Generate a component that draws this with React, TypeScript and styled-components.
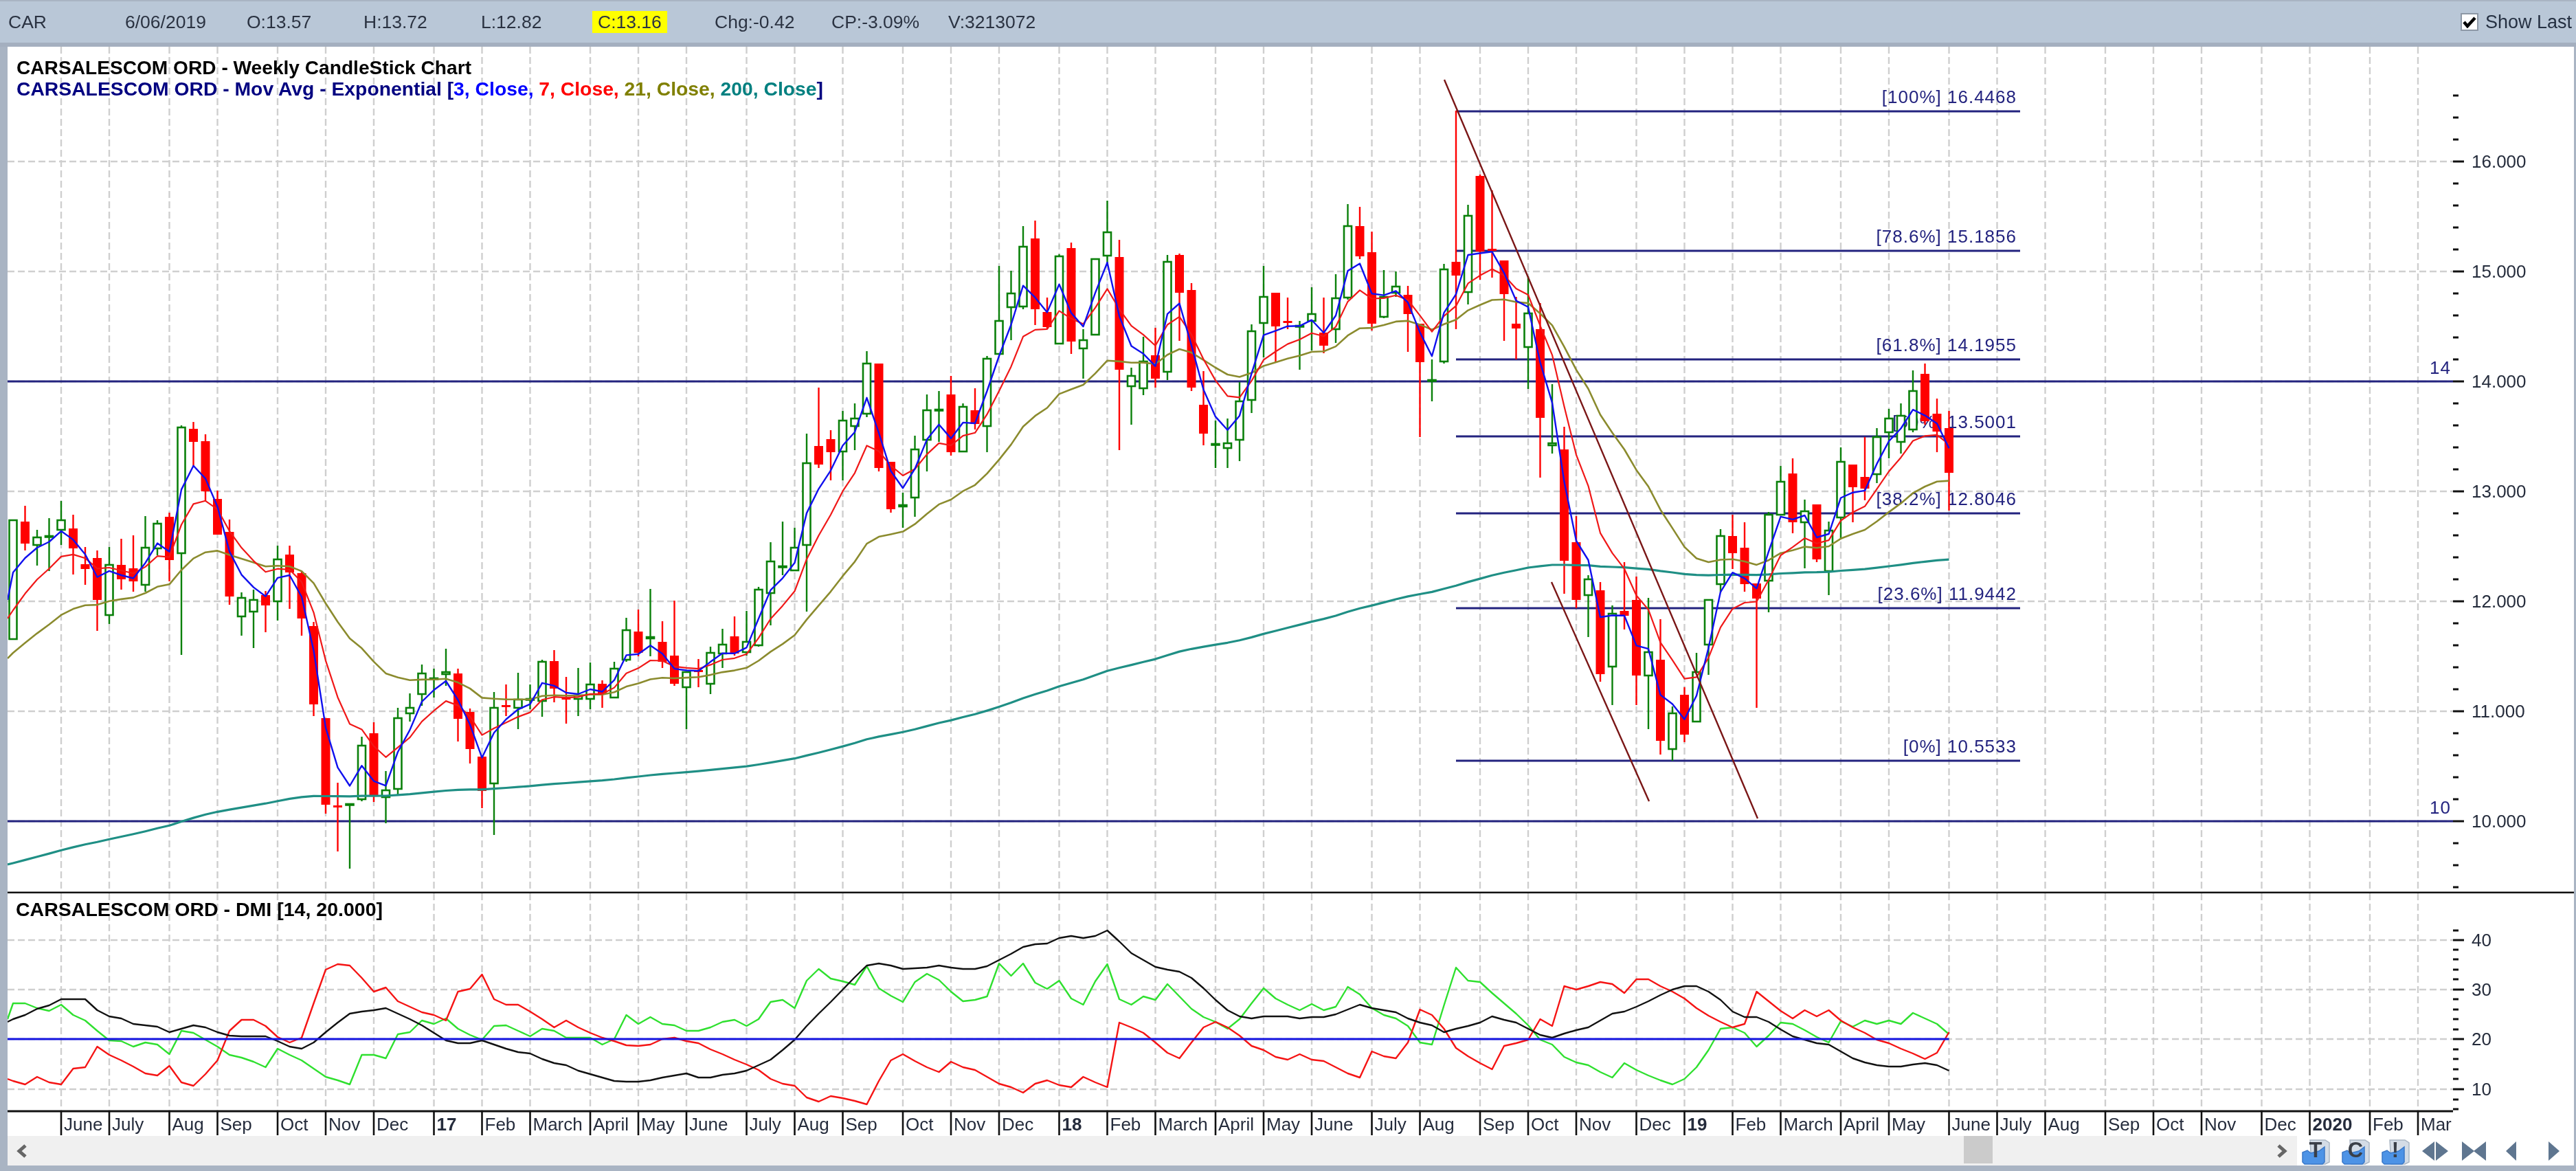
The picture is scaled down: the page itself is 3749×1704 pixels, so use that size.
import styled, { createGlobalStyle } from 'styled-components'

const WIDTH = 3749
const PLOT_LEFT = 11
const PLOT_RIGHT = 3570
const STEP = 17.5
const FONT = '"Liberation Sans", Arial, sans-serif'

const GlobalStyle = createGlobalStyle`
  html, body {
    margin: 0;
    padding: 0;
    background: #a9b4c3;
  }
`

const Root = styled.div`
  width: ${WIDTH}px;
  height: 1704px;
  display: flex;
  flex-direction: column;
  overflow: hidden;
  background: #a9b4c3;
  font-family: ${FONT};
  filter: blur(0.7px);
`

const TopBar = styled.div`
  height: 60px;
  margin-top: 2px;
  display: flex;
  align-items: center;
  padding: 0 6px 0 12px;
  background: #b9c7d7;
  color: #2b3342;
  font-size: 26.5px;
`

const Field = styled.span<{ $w: number }>`
  flex: 0 0 ${(p) => p.$w}px;
  white-space: nowrap;
`

const Highlight = styled.span`
  display: inline-block;
  height: 32px;
  line-height: 32px;
  padding: 0 8px;
  background: #ffff00;
`

const ShowLast = styled.label`
  margin-left: auto;
  display: flex;
  align-items: center;
  gap: 10px;
  color: #253042;
  font-size: 27px;
`

const CheckBox = styled.span`
  width: 22px;
  height: 22px;
  display: flex;
  align-items: center;
  justify-content: center;
  background: #fff;
  border: 2px solid #8d98a6;
`

const Strip = styled.div`
  height: 6px;
  background: #a4afbf;
`

const Frame = styled.div`
  flex: 1;
  margin: 0 3px 8px ${PLOT_LEFT}px;
  display: flex;
  flex-direction: column;
  background: #fff;
`

const ChartSvg = styled.svg`
  display: block;
  width: 100%;
`

const ScrollRow = styled.div`
  height: 43px;
  display: flex;
  align-items: center;
`

const TrackWrap = styled.div`
  position: relative;
  height: 100%;
`

const Track = styled.div`
  width: 3332px;
  height: 100%;
  display: flex;
  align-items: center;
  justify-content: space-between;
  padding: 0 13px 0 12px;
  box-sizing: border-box;
  background: #f0f0f0;
`

const Thumb = styled.div`
  position: absolute;
  left: 2847px;
  top: 0;
  width: 42px;
  height: 40px;
  background: #cbcbcb;
`

const IconRow = styled.div`
  display: flex;
  align-items: center;
  padding-left: 7px;
`

const IconSlot = styled.span<{ $w: number }>`
  flex: 0 0 ${(p) => p.$w}px;
  display: flex;
`

const Label = styled.text<{ $weight?: number }>`
  font-family: ${FONT};
  font-size: 26px;
  font-weight: ${(p) => p.$weight ?? 400};
  fill: #252c3c;
`

const FibLabel = styled(Label)`
  fill: #23237f;
  letter-spacing: 1px;
`

const Title = styled.text<{ $fill?: string }>`
  font-family: ${FONT};
  font-size: 27px;
  font-weight: 700;
  fill: ${(p) => p.$fill ?? '#000'};
`

const Span = styled.tspan<{ $fill: string }>`
  fill: ${(p) => p.$fill};
`

// high, body top, body bottom, low (screen y), 1 = up week
type Candle = [number, number, number, number, number]

const candles: Candle[] = [
  [757, 757, 930, 930, 1], [736, 759, 791, 801, 0], [771, 782, 793, 823, 1], [754, 780, 781, 831, 1],
  [729, 757, 771, 793, 1], [749, 769, 798, 836, 0], [796, 821, 828, 851, 0], [801, 812, 873, 918, 0],
  [796, 822, 895, 908, 1], [784, 822, 843, 858, 0], [779, 827, 846, 861, 0], [751, 797, 851, 861, 1],
  [757, 762, 798, 808, 1], [746, 752, 815, 846, 0], [619, 622, 805, 953, 1], [614, 624, 643, 679, 0],
  [632, 642, 715, 729, 0], [714, 726, 778, 778, 0], [756, 774, 868, 880, 0], [862, 870, 897, 925, 1],
  [858, 873, 890, 943, 1], [860, 866, 881, 920, 0], [794, 814, 875, 903, 1], [794, 807, 833, 886, 0],
  [831, 834, 900, 925, 0], [905, 911, 1025, 1042, 0], [1045, 1045, 1171, 1184, 0], [1139, 1172, 1175, 1239, 0],
  [1170, 1170, 1171, 1264, 1], [1072, 1085, 1163, 1166, 1], [1051, 1067, 1159, 1167, 0], [1122, 1150, 1160, 1198, 1],
  [1030, 1045, 1148, 1157, 1], [1009, 1030, 1038, 1050, 1], [967, 980, 1010, 1027, 1], [973, 987, 988, 1015, 1],
  [944, 978, 981, 998, 1], [973, 980, 1046, 1079, 0], [1031, 1036, 1090, 1111, 0], [1101, 1101, 1151, 1176, 0],
  [1007, 1030, 1140, 1215, 1], [996, 1026, 1027, 1042, 0], [979, 1018, 1030, 1061, 1], [996, 1017, 1018, 1032, 1],
  [960, 963, 1020, 1043, 1], [946, 962, 1002, 1022, 0], [985, 1015, 1018, 1053, 0], [972, 1012, 1017, 1042, 1],
  [964, 996, 1017, 1032, 1], [990, 995, 1010, 1030, 0], [963, 973, 1015, 1015, 1], [899, 917, 960, 963, 1],
  [887, 919, 950, 955, 0], [857, 927, 929, 955, 1], [904, 934, 963, 972, 0], [874, 954, 995, 998, 0],
  [978, 978, 1000, 1061, 1], [959, 975, 977, 1000, 0], [941, 950, 995, 1010, 1], [915, 938, 951, 972, 1],
  [897, 926, 951, 954, 0], [889, 934, 949, 954, 1], [854, 858, 939, 941, 1], [789, 817, 863, 910, 1],
  [759, 824, 825, 837, 1], [768, 797, 830, 831, 1], [631, 674, 793, 890, 1], [564, 649, 676, 681, 0],
  [626, 639, 658, 699, 0], [598, 612, 657, 699, 1], [587, 609, 620, 655, 1], [511, 529, 602, 607, 1],
  [529, 529, 681, 686, 0], [672, 672, 741, 746, 0], [717, 735, 737, 768, 1], [634, 654, 724, 752, 1],
  [574, 597, 640, 686, 1], [569, 596, 597, 643, 1], [547, 574, 658, 663, 0], [587, 592, 657, 658, 1],
  [565, 597, 617, 625, 0], [518, 522, 620, 658, 1], [387, 467, 515, 515, 1], [394, 427, 447, 495, 1],
  [329, 359, 446, 450, 1], [321, 347, 450, 473, 0], [433, 454, 476, 479, 0], [370, 373, 500, 500, 1],
  [353, 361, 497, 515, 0], [479, 495, 507, 551, 1], [377, 377, 487, 487, 1], [292, 338, 372, 385, 1],
  [349, 374, 538, 655, 0], [535, 547, 562, 618, 1], [490, 526, 565, 575, 1], [477, 517, 551, 564, 0],
  [371, 381, 541, 553, 1], [369, 371, 426, 496, 0], [412, 422, 564, 569, 0], [540, 589, 631, 648, 0],
  [612, 646, 647, 681, 1], [609, 645, 652, 681, 1], [556, 584, 640, 671, 1], [472, 482, 582, 601, 1],
  [387, 432, 470, 520, 1], [426, 426, 475, 528, 0], [433, 467, 468, 479, 0], [467, 474, 475, 538, 1],
  [418, 457, 467, 510, 1], [433, 484, 503, 514, 0], [399, 434, 479, 499, 1], [297, 329, 433, 436, 1],
  [301, 329, 373, 377, 0], [337, 367, 471, 481, 0], [393, 432, 461, 463, 1], [395, 417, 426, 432, 1],
  [416, 429, 457, 512, 0], [471, 471, 527, 636, 0], [523, 553, 554, 584, 1], [384, 392, 526, 529, 1],
  [161, 381, 401, 479, 0], [298, 314, 425, 443, 1], [254, 256, 366, 407, 0], [277, 362, 364, 404, 0],
  [379, 379, 428, 496, 0], [432, 471, 478, 523, 0], [402, 456, 505, 566, 1], [441, 479, 608, 695, 0],
  [559, 645, 648, 660, 1], [621, 654, 816, 864, 0], [751, 789, 873, 885, 0], [837, 843, 866, 927, 1],
  [847, 859, 981, 992, 0], [881, 893, 970, 1026, 1], [818, 889, 896, 916, 0], [839, 873, 983, 1026, 0],
  [870, 949, 983, 1061, 1], [901, 960, 1078, 1098, 0], [1028, 1038, 1090, 1107, 1], [1000, 1011, 1069, 1080, 0],
  [950, 978, 1050, 1051, 1], [872, 873, 938, 982, 1], [770, 780, 850, 862, 1], [749, 780, 805, 828, 0],
  [760, 797, 850, 861, 0], [849, 849, 871, 1030, 0], [745, 749, 845, 891, 1], [678, 701, 749, 749, 1],
  [667, 689, 760, 776, 0], [727, 744, 760, 827, 1], [734, 734, 814, 818, 0], [759, 772, 831, 866, 1],
  [651, 672, 753, 785, 1], [676, 676, 709, 760, 0], [636, 694, 711, 728, 0], [623, 636, 690, 703, 1],
  [595, 609, 629, 667, 1], [587, 605, 643, 660, 1], [539, 569, 625, 629, 1], [529, 544, 613, 618, 0],
  [580, 602, 628, 658, 0], [598, 623, 688, 743, 0],
]

// DMI series, one screen y per week
const ADX = [
  1483, 1477, 1468, 1463, 1454, 1454, 1454, 1470, 1479, 1482, 1490, 1492, 1494, 1502, 1497, 1492, 1495, 1502, 1507, 1508,
  1508, 1508, 1515, 1523, 1526, 1517, 1502, 1488, 1475, 1472, 1470, 1467, 1475, 1483, 1492, 1503, 1514, 1518, 1518, 1514,
  1520, 1526, 1531, 1533, 1541, 1547, 1550, 1558, 1563, 1568, 1573, 1574, 1574, 1572, 1568, 1565, 1562, 1568, 1568, 1564,
  1562, 1558, 1550, 1542, 1528, 1513, 1493, 1475, 1458, 1440, 1422, 1405, 1402, 1405, 1410, 1409, 1408, 1405, 1408, 1410,
  1410, 1406, 1397, 1388, 1378, 1374, 1373, 1365, 1362, 1365, 1362, 1354, 1370, 1387, 1397, 1407, 1411, 1414, 1423, 1438,
  1455, 1470, 1479, 1482, 1479, 1479, 1479, 1482, 1480, 1480, 1476, 1469, 1462, 1467, 1470, 1473, 1482, 1488, 1492, 1502,
  1497, 1493, 1488, 1479, 1484, 1488, 1497, 1506, 1510, 1504, 1499, 1495, 1485, 1475, 1472, 1465, 1457, 1448, 1440, 1435,
  1435, 1443, 1455, 1472, 1480, 1480, 1487, 1498, 1508, 1513, 1518, 1520, 1530, 1540, 1546, 1550, 1552, 1552, 1549, 1547,
  1550, 1558,
]

const MINUS_DI = [
  1573, 1578, 1567, 1575, 1578, 1555, 1553, 1523, 1535, 1543, 1552, 1562, 1565, 1551, 1575, 1580, 1563, 1543, 1500, 1484,
  1484, 1493, 1509, 1517, 1510, 1460, 1411, 1403, 1405, 1423, 1443, 1437, 1457, 1465, 1473, 1477, 1485, 1443, 1439, 1418,
  1454, 1462, 1462, 1472, 1483, 1495, 1485, 1495, 1503, 1510, 1515, 1521, 1522, 1520, 1512, 1510, 1515, 1518, 1527, 1534,
  1542, 1549, 1557, 1570, 1577, 1580, 1597, 1603, 1595, 1598, 1602, 1607, 1573, 1543, 1534, 1544, 1553, 1560, 1545, 1553,
  1557, 1567, 1577, 1582, 1590, 1577, 1572, 1579, 1582, 1567, 1575, 1582, 1488, 1495, 1503, 1517, 1532, 1540, 1517, 1495,
  1487, 1495, 1507, 1522, 1528, 1538, 1542, 1534, 1542, 1544, 1553, 1562, 1568, 1530, 1537, 1540, 1517, 1469, 1477, 1497,
  1525, 1537, 1547, 1556, 1522, 1518, 1513, 1483, 1493, 1435, 1440, 1435, 1429, 1432, 1445, 1425, 1425, 1435, 1443, 1453,
  1467, 1478, 1487, 1495, 1490, 1443, 1457, 1471, 1482, 1470, 1479, 1470, 1485, 1495, 1503, 1513, 1518, 1526, 1533, 1541,
  1532, 1502,
]

const PLUS_DI = [
  1460, 1460, 1467, 1471, 1462, 1477, 1485, 1500, 1514, 1515, 1523, 1517, 1520, 1534, 1500, 1503, 1513, 1523, 1535, 1539,
  1545, 1553, 1526, 1535, 1543, 1555, 1567, 1572, 1578, 1535, 1535, 1540, 1505, 1502, 1485, 1490, 1482, 1497, 1506, 1513,
  1493, 1492, 1500, 1508, 1497, 1500, 1510, 1510, 1510, 1520, 1512, 1477, 1490, 1480, 1490, 1492, 1500, 1500, 1495, 1487,
  1484, 1493, 1483, 1458, 1455, 1467, 1427, 1410, 1424, 1428, 1433, 1406, 1438, 1449, 1458, 1429, 1417, 1426, 1443, 1457,
  1455, 1450, 1402, 1420, 1402, 1430, 1439, 1427, 1453, 1462, 1428, 1403, 1454, 1462, 1450, 1455, 1432, 1450, 1468, 1480,
  1487, 1497, 1483, 1460, 1438, 1453, 1462, 1470, 1461, 1470, 1465, 1436, 1447, 1467, 1477, 1482, 1493, 1517, 1520, 1463,
  1408, 1427, 1429, 1445, 1460, 1475, 1492, 1513, 1520, 1538, 1546, 1550, 1560, 1568, 1547, 1557, 1565, 1572, 1578, 1570,
  1553, 1528, 1497, 1495, 1503, 1523, 1507, 1488, 1490, 1499, 1509, 1517, 1486, 1494, 1485, 1490, 1485, 1490, 1474, 1482,
  1490, 1505,
]

const MONTHS: [number, string, boolean?][] = [
  [4, 'June'], [8, 'July'], [13, 'Aug'], [17, 'Sep'], [22, 'Oct'], [26, 'Nov'], [30, 'Dec'], [35, '17', true],
  [39, 'Feb'], [43, 'March'], [48, 'April'], [52, 'May'], [56, 'June'], [61, 'July'], [65, 'Aug'], [69, 'Sep'],
  [74, 'Oct'], [78, 'Nov'], [82, 'Dec'], [87, '18', true], [91, 'Feb'], [95, 'March'], [100, 'April'], [104, 'May'],
  [108, 'June'], [113, 'July'], [117, 'Aug'], [122, 'Sep'], [126, 'Oct'], [130, 'Nov'], [135, 'Dec'], [139, '19', true],
  [143, 'Feb'], [147, 'March'], [152, 'April'], [156, 'May'], [161, 'June'], [165, 'July'], [169, 'Aug'], [174, 'Sep'],
  [178, 'Oct'], [182, 'Nov'], [187, 'Dec'], [191, '2020', true], [196, 'Feb'], [200, 'Mar'],
]

const FIBS: [string, number][] = [
  ['[100%] 16.4468', 162],
  ['[78.6%] 15.1856', 365],
  ['[61.8%] 14.1955', 523],
  ['[50%] 13.5001', 635],
  ['[38.2%] 12.8046', 747],
  ['[23.6%] 11.9442', 885],
  ['[0%] 10.5533', 1107],
]

const xAt = (i: number) => 19 + STEP * i
const closes = candles.map((c) => (c[4] ? c[1] : c[2]))

function ema(period: number, seed: number) {
  const k = 2 / (period + 1)
  const out = [seed]
  for (let i = 1; i < closes.length; i++) out.push(closes[i] * k + out[i - 1] * (1 - k))
  return out
}

// the lines start at the panel edge, a little before the first candle
const toPoints = (startY: number, ys: number[]) =>
  `${PLOT_LEFT},${startY} ` + ys.map((y, i) => `${xAt(i)},${y.toFixed(1)}`).join(' ')

const range = (from: number, to: number, by: number) => {
  const out: number[] = []
  for (let v = from; v <= to; v += by) out.push(v)
  return out
}

function VerticalGrid({ top, bottom }: { top: number; bottom: number }) {
  return (
    <g stroke="#cfcfcf" strokeWidth={2.4} strokeDasharray="10 5">
      {MONTHS.map(([i]) => (
        <line key={i} x1={xAt(i)} x2={xAt(i)} y1={top} y2={bottom} />
      ))}
    </g>
  )
}

function HorizontalGrid({ levels }: { levels: number[] }) {
  return (
    <g stroke="#cfcfcf" strokeWidth={2.4} strokeDasharray="10 5">
      {levels.map((y) => (
        <line key={y} x1={PLOT_LEFT} x2={PLOT_RIGHT} y1={y} y2={y} />
      ))}
    </g>
  )
}

function Ticks({ minor, major }: { minor: number[]; major: number[] }) {
  return (
    <g stroke="#111" strokeWidth={3}>
      {minor.map((y) => (
        <line key={y} x1={PLOT_RIGHT} x2={3578} y1={y} y2={y} />
      ))}
      {major.map((y) => (
        <line key={y} x1={PLOT_RIGHT} x2={3586} y1={y} y2={y} />
      ))}
    </g>
  )
}

function CandleMark({ c, i }: { c: Candle; i: number }) {
  const [h, t, b, l, up] = c
  const x = xAt(i)
  const color = up ? '#0a800a' : '#ff0000'
  return (
    <g>
      <line x1={x} x2={x} y1={h} y2={l} stroke={color} strokeWidth={2.4} />
      {up ? (
        <rect x={x - 5.5} y={t} width={11} height={Math.max(b - t, 1.5)} fill="#fff" stroke={color} strokeWidth={2.6} />
      ) : (
        <rect x={x - 6.5} y={t} width={13} height={Math.max(b - t, 3)} fill={color} />
      )}
    </g>
  )
}

function PriceChart() {
  const levels = range(235, 1195, 160)
  const minors = range(139, 1300, 32).filter((y) => (y - 235) % 160 !== 0)
  return (
    <ChartSvg viewBox="11 68 3735 1232" height={1232}>
      <VerticalGrid top={68} bottom={1300} />
      <HorizontalGrid levels={levels} />
      <Title x={24} y={108} textLength={662} lengthAdjust="spacingAndGlyphs">
        CARSALESCOM ORD - Weekly CandleStick Chart
      </Title>
      <Title x={24} y={139} textLength={1174} lengthAdjust="spacingAndGlyphs" $fill="#000080">
        CARSALESCOM ORD - Mov Avg - Exponential [<Span $fill="#0000ff">3, Close, </Span>
        <Span $fill="#ff0000">7, Close, </Span>
        <Span $fill="#808000">21, Close, </Span>
        <Span $fill="#008080">200, Close</Span>]
      </Title>
      <g stroke="#23237f" strokeWidth={3}>
        <line x1={PLOT_LEFT} x2={PLOT_RIGHT} y1={555} y2={555} />
        <line x1={PLOT_LEFT} x2={PLOT_RIGHT} y1={1195} y2={1195} />
        {FIBS.map(([text, y]) => (
          <line key={text} x1={2119} x2={2940} y1={y} y2={y} />
        ))}
      </g>
      {FIBS.map(([text, y]) => (
        <FibLabel key={text} x={2935} y={y - 12} textAnchor="end">
          {text}
        </FibLabel>
      ))}
      <FibLabel x={3536} y={544}>14</FibLabel>
      <FibLabel x={3536} y={1184}>10</FibLabel>
      {candles.map((c, i) => (
        <CandleMark key={i} c={c} i={i} />
      ))}
      <g fill="none" strokeLinejoin="round">
        <polyline points={toPoints(1258, ema(200, 1256))} stroke="#1f8f85" strokeWidth={3.2} />
        <polyline points={toPoints(958, ema(21, 950))} stroke="#8b8b2e" strokeWidth={2.6} />
        <polyline points={toPoints(900, ema(7, 888))} stroke="#f01818" strokeWidth={2.2} />
        <polyline points={toPoints(873, ema(3, 833))} stroke="#1010ee" strokeWidth={2.4} />
        <line x1={2102} y1={116} x2={2558} y2={1191} stroke="#7a1616" strokeWidth={2.4} />
        <line x1={2258} y1={847} x2={2400} y2={1166} stroke="#7a1616" strokeWidth={2.4} />
      </g>
      <Ticks minor={minors} major={levels} />
      {levels.map((y, n) => (
        <Label key={y} x={3597} y={y + 9}>
          {(16 - n).toFixed(3)}
        </Label>
      ))}
      <line x1={PLOT_LEFT} x2={3746} y1={1299} y2={1299} stroke="#111" strokeWidth={3} />
    </ChartSvg>
  )
}

function DmiChart() {
  const levels = [1368, 1440, 1512, 1585]
  return (
    <ChartSvg viewBox="11 1300 3735 353" height={353}>
      <VerticalGrid top={1300} bottom={1617} />
      <HorizontalGrid levels={levels} />
      <Title x={23} y={1333} textLength={534} lengthAdjust="spacingAndGlyphs">
        CARSALESCOM ORD - DMI [14, 20.000]
      </Title>
      <g fill="none" strokeWidth={2.4} strokeLinejoin="round">
        <polyline points={toPoints(1483, PLUS_DI)} stroke="#2fe02f" />
        <polyline points={toPoints(1570, MINUS_DI)} stroke="#f51414" />
        <polyline points={toPoints(1487, ADX)} stroke="#111" />
      </g>
      <line x1={PLOT_LEFT} x2={xAt(161)} y1={1512} y2={1512} stroke="#1414e0" strokeWidth={3} />
      <Ticks
        minor={[1354, 1382, 1396, 1411, 1425, 1454, 1469, 1483, 1498, 1527, 1541, 1556, 1570, 1600, 1614]}
        major={levels}
      />
      {levels.map((y, n) => (
        <Label key={y} x={3597} y={y + 9}>
          {40 - n * 10}
        </Label>
      ))}
      <line x1={PLOT_LEFT} x2={PLOT_RIGHT} y1={1617} y2={1617} stroke="#111" strokeWidth={3} />
      {MONTHS.map(([i, name, bold]) => (
        <g key={i}>
          <line x1={xAt(i)} x2={xAt(i)} y1={1617} y2={1652} stroke="#111" strokeWidth={2.6} />
          <Label x={xAt(i) + 4} y={1645} $weight={bold ? 700 : 400}>
            {name}
          </Label>
        </g>
      ))}
    </ChartSvg>
  )
}

function FolderIcon({ mark }: { mark: string }) {
  return (
    <svg width="42" height="43" viewBox="0 0 42 43">
      <path d="M12 6h22l6 4v28l-6 3H14z" fill="#d4dce6" stroke="#aab6c4" strokeWidth="1.5" />
      <path d="M1 24l7-3 5 4 12-3 8-6v22l-3 3H4l-3-3z" fill="#4d93e6" stroke="#3a78c8" strokeWidth="1.5" />
      <text x="20" y="31" textAnchor="middle" fontFamily={FONT} fontWeight="700" fontSize="31" fill="#3a3f48">
        {mark}
      </text>
    </svg>
  )
}

function NavIcon({ d }: { d: string }) {
  return (
    <svg width="40" height="32" viewBox="0 0 40 32">
      <path d={d} fill="#5f7690" />
    </svg>
  )
}

export default function App() {
  return (
    <Root>
      <GlobalStyle />
      <TopBar>
        <Field $w={170}>CAR</Field>
        <Field $w={177}>6/06/2019</Field>
        <Field $w={170}>O:13.57</Field>
        <Field $w={171}>H:13.72</Field>
        <Field $w={162}>L:12.82</Field>
        <Field $w={178}>
          <Highlight>C:13.16</Highlight>
        </Field>
        <Field $w={170}>Chg:-0.42</Field>
        <Field $w={170}>CP:-3.09%</Field>
        <Field $w={170}>V:3213072</Field>
        <ShowLast>
          <CheckBox>
            <svg width="20" height="18" viewBox="0 0 20 18">
              <path d="M2 9l5 6L18 3" fill="none" stroke="#000" strokeWidth="4.5" />
            </svg>
          </CheckBox>
          Show Last
        </ShowLast>
      </TopBar>
      <Strip />
      <Frame>
        <PriceChart />
        <DmiChart />
        <ScrollRow>
          <TrackWrap>
            <Track>
              <svg width="18" height="20" viewBox="0 0 18 20">
                <path d="M14 2L5 10l9 8" fill="none" stroke="#666" strokeWidth="5" />
              </svg>
              <svg width="18" height="20" viewBox="0 0 18 20">
                <path d="M4 2l9 8-9 8" fill="none" stroke="#666" strokeWidth="5" />
              </svg>
            </Track>
            <Thumb />
          </TrackWrap>
          <IconRow>
            <IconSlot $w={58}><FolderIcon mark="T" /></IconSlot>
            <IconSlot $w={58}><FolderIcon mark="C" /></IconSlot>
            <IconSlot $w={58}><FolderIcon mark="!" /></IconSlot>
            <IconSlot $w={58}><NavIcon d="M19 2v28L1 16zM21 2v28l18-14z" /></IconSlot>
            <IconSlot $w={64}><NavIcon d="M1 2l18 14L1 30zM36 2v28L18 16z" /></IconSlot>
            <IconSlot $w={62}><NavIcon d="M16 2v28L1 16z" /></IconSlot>
            <IconSlot $w={40}><NavIcon d="M1 2l16 14L1 30z" /></IconSlot>
          </IconRow>
        </ScrollRow>
      </Frame>
    </Root>
  )
}
